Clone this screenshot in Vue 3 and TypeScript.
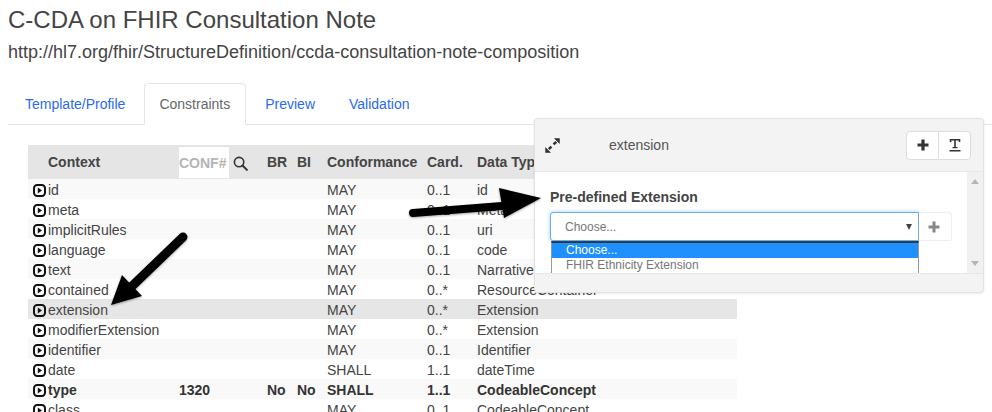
<script setup lang="ts">
interface Row {
  name: string;
  conf?: string;
  br?: string;
  bi?: string;
  conformance: string;
  card: string;
  type: string;
  bold?: boolean;
  active?: boolean;
}

const tabs = ['Template/Profile', 'Constraints', 'Preview', 'Validation'];

const rows: Row[] = [
  { name: 'id', conformance: 'MAY', card: '0..1', type: 'id' },
  { name: 'meta', conformance: 'MAY', card: '0..1', type: 'Meta' },
  { name: 'implicitRules', conformance: 'MAY', card: '0..1', type: 'uri' },
  { name: 'language', conformance: 'MAY', card: '0..1', type: 'code' },
  { name: 'text', conformance: 'MAY', card: '0..1', type: 'Narrative' },
  { name: 'contained', conformance: 'MAY', card: '0..*', type: 'ResourceContainer' },
  { name: 'extension', conformance: 'MAY', card: '0..*', type: 'Extension', active: true },
  { name: 'modifierExtension', conformance: 'MAY', card: '0..*', type: 'Extension' },
  { name: 'identifier', conformance: 'MAY', card: '0..1', type: 'Identifier' },
  { name: 'date', conformance: 'SHALL', card: '1..1', type: 'dateTime' },
  { name: 'type', conf: '1320', br: 'No', bi: 'No', conformance: 'SHALL', card: '1..1', type: 'CodeableConcept', bold: true },
  { name: 'class', conformance: 'MAY', card: '0..1', type: 'CodeableConcept' },
];
</script>

<template>
  <div class="page">
    <h1 class="title">C-CDA on FHIR Consultation Note</h1>
    <p class="url">http://hl7.org/fhir/StructureDefinition/ccda-consultation-note-composition</p>

    <ul class="tabs">
      <li v-for="tab in tabs" :key="tab" class="tab" :class="{ current: tab === 'Constraints' }">{{ tab }}</li>
    </ul>

    <div class="grid">
      <div class="row head">
        <div class="context-head">Context</div>
        <div class="conf-head">
          <span class="conf-input">CONF#</span>
          <svg class="search" viewBox="0 0 16 16" width="15" height="15">
            <circle cx="6.5" cy="6.5" r="5" fill="none" stroke="#333" stroke-width="1.7" />
            <path d="M10.2 10.2 14.8 14.8" stroke="#333" stroke-width="2.2" stroke-linecap="round" />
          </svg>
        </div>
        <div>BR</div>
        <div>BI</div>
        <div>Conformance</div>
        <div>Card.</div>
        <div>Data Type</div>
      </div>
      <div
        v-for="row in rows"
        :key="row.name"
        class="row"
        :class="{ strong: row.bold, active: row.active }"
      >
        <div class="name">
          <svg class="play" viewBox="0 0 13 13" width="13" height="13">
            <rect x="1" y="1" width="11" height="11" rx="3.2" fill="none" stroke="#111" stroke-width="2" />
            <path d="M4.8 3.6 9 6.5 4.8 9.4Z" fill="#111" />
          </svg>
          {{ row.name }}
        </div>
        <div>{{ row.conf }}</div>
        <div>{{ row.br }}</div>
        <div>{{ row.bi }}</div>
        <div>{{ row.conformance }}</div>
        <div>{{ row.card }}</div>
        <div>{{ row.type }}</div>
      </div>
    </div>

    <section class="panel">
      <header class="panel-head">
        <svg class="expand" viewBox="0 0 16 16" width="17" height="17">
          <path d="M9 7 11.5 4.5M7 9 4.5 11.5" stroke="#333" stroke-width="2.4" />
          <path d="M10 1.5H14.5V6ZM1.5 10V14.5H6Z" fill="#333" stroke="#333" stroke-width="0.6" />
        </svg>
        <span class="panel-title">extension</span>
        <div class="btn-group">
          <button class="icon-btn">
            <svg viewBox="0 0 14 14" width="14" height="14">
              <path d="M7 1.5V12.5M1.5 7H12.5" stroke="#333" stroke-width="3.2" />
            </svg>
          </button>
          <button class="icon-btn">
            <svg viewBox="0 0 14 14" width="14" height="14">
              <path d="M2.5 4V1.8H11.5V4M7 1.8V10" fill="none" stroke="#333" stroke-width="1.6" />
              <path d="M4.5 9.6H9.5M1.5 12.7H12.5" stroke="#333" stroke-width="1.4" />
            </svg>
          </button>
        </div>
      </header>
      <div class="panel-body">
        <div class="form">
          <label class="label">Pre-defined Extension</label>
          <div class="select-line">
            <div class="select">
              <span>Choose...</span>
              <i class="caret"></i>
            </div>
            <button class="add">
              <svg viewBox="0 0 14 14" width="14" height="14">
                <path d="M7 1.5V12.5M1.5 7H12.5" stroke="#888" stroke-width="3" />
              </svg>
            </button>
          </div>
          <ul class="options">
            <li class="picked">Choose...</li>
            <li>FHIR Ethnicity Extension</li>
          </ul>
        </div>
        <div class="scrollbar">
          <i class="up"></i>
          <i class="down"></i>
        </div>
      </div>
      <footer class="panel-foot"></footer>
    </section>

    <svg class="arrows" width="992" height="412" viewBox="0 0 992 412">
      <defs>
        <filter id="soft" x="-20%" y="-20%" width="140%" height="140%">
          <feDropShadow dx="0" dy="1" stdDeviation="1" flood-color="#000" flood-opacity="0.35" />
        </filter>
      </defs>
      <g filter="url(#soft)">
        <path d="M183 237 128 290" stroke="#000" stroke-width="9" stroke-linecap="round" />
        <path d="M111 305 122 275 142 296Z" fill="#000" />
        <path d="M413 213 515 205" stroke="#000" stroke-width="8" stroke-linecap="round" />
        <path d="M541 198 499 188 504 218Z" fill="#000" />
      </g>
    </svg>
  </div>
</template>

<style scoped>
.page {
  position: relative;
  width: 992px;
  height: 412px;
  overflow: hidden;
  background: #fff;
  color: #444;
  font-family: "Liberation Sans", Arial, sans-serif;
  font-size: 14px;
}

.title {
  margin: 0;
  padding: 6px 0 0 8px;
  font-size: 24px;
  font-weight: 400;
  line-height: 28px;
  color: #444;
}

.url {
  margin: 7px 0 0 8px;
  font-size: 18px;
  line-height: 22px;
  color: #444;
}

.tabs {
  display: flex;
  height: 41px;
  margin: 20px 0 0 8px;
  padding: 0;
  list-style: none;
  border-bottom: 1px solid #e6e6e6;
}

.tab {
  padding: 11px 16px 0;
  color: #2a6af0;
  font-size: 14px;
  line-height: 18px;
  border: 1px solid transparent;
}

.tab:first-child,
.tab.current {
  margin-right: 2px;
}

.tab.current {
  box-sizing: border-box;
  height: 42px;
  padding: 11px 15px 0 14px;
  color: #666;
  background: #fff;
  border-color: #e6e6e6;
  border-bottom-color: #fff;
  border-radius: 4px 4px 0 0;
}

.grid {
  width: 709px;
  margin: 20px 0 0 28px;
}

.row {
  display: grid;
  grid-template-columns: 151px 88px 30px 30px 100px 50px 1fr;
  box-sizing: border-box;
  height: 20px;
  padding-top: 2px;
  align-items: center;
  line-height: 18px;
  color: #444;
}

.row:nth-child(even) {
  background: #f9f9f9;
}

.row.active {
  background: #e6e6e6;
}

.row.strong {
  font-weight: 700;
  color: #333;
}

.row.head {
  height: 34px;
  padding-top: 0;
  background: #e5e5e5;
  font-weight: 700;
  color: #444;
}

.context-head {
  padding-left: 20px;
}

.conf-head {
  display: flex;
  align-items: center;
  gap: 4px;
}

.conf-input {
  width: 50px;
  height: 31px;
  line-height: 33px;
  background: #fff;
  color: #b5b5b5;
  white-space: nowrap;
}

.search {
  margin-top: 2px;
}

.name {
  display: flex;
  align-items: center;
  gap: 2px;
  padding-left: 5px;
}

.panel {
  position: absolute;
  left: 534px;
  top: 118px;
  display: flex;
  flex-direction: column;
  width: 450px;
  height: 175px;
  box-sizing: border-box;
  background: #f3f3f3;
  border: 1px solid #e2e2e2;
  border-radius: 4px;
  box-shadow: 0 1px 3px rgba(0, 0, 0, 0.08);
}

.panel-head {
  display: flex;
  align-items: center;
  height: 52px;
  padding: 0 12px 0 9px;
  border-bottom: 1px solid #e6e6e6;
}

.panel-title {
  margin-left: 48px;
  font-size: 14px;
  color: #555;
}

.btn-group {
  display: flex;
  margin-left: auto;
}

.icon-btn {
  display: flex;
  align-items: center;
  justify-content: center;
  width: 33px;
  height: 29px;
  padding: 0;
  background: #fff;
  border: 1px solid #ddd;
}

.icon-btn:first-child {
  border-radius: 4px 0 0 4px;
}

.icon-btn:last-child {
  margin-left: -1px;
  border-radius: 0 4px 4px 0;
}

.panel-body {
  display: flex;
  height: 101px;
  overflow: hidden;
  background: #fff;
}

.form {
  flex: 1;
  padding: 16px 0 0 15px;
}

.label {
  display: block;
  height: 24px;
  line-height: 18px;
  font-weight: 700;
  color: #444;
}

.select-line {
  display: flex;
}

.select {
  display: flex;
  align-items: center;
  justify-content: space-between;
  box-sizing: border-box;
  width: 369px;
  height: 29px;
  padding: 0 6px 0 14px;
  color: #777;
  font-size: 12px;
  background: #fff;
  border: 1px solid #66afe9;
  border-radius: 3px 0 0 3px;
  box-shadow: 0 0 4px rgba(102, 175, 233, 0.6);
}

.caret {
  width: 0;
  height: 0;
  border-left: 3px solid transparent;
  border-right: 3px solid transparent;
  border-top: 6px solid #444;
}

.add {
  display: flex;
  align-items: center;
  justify-content: center;
  box-sizing: border-box;
  width: 33px;
  height: 29px;
  padding: 0 3px 0 0;
  background: #fff;
  border: 1px solid #eee;
  border-left: 0;
  border-radius: 0 3px 3px 0;
}

.options {
  box-sizing: border-box;
  width: 368px;
  height: 40px;
  margin: 0 0 0 1px;
  padding: 0;
  list-style: none;
  font-size: 12px;
  line-height: 15px;
  color: #777;
  background: #fff;
  border: 1px solid #999;
  border-top: 2px solid #222;
}

.options li {
  padding-left: 14px;
}

.options .picked {
  color: #fff;
  background: #1e90ff;
}

.scrollbar {
  position: relative;
  width: 16px;
  background: #f1f1f1;
}

.up,
.down {
  position: absolute;
  left: 4px;
  width: 0;
  height: 0;
  border-left: 4px solid transparent;
  border-right: 4px solid transparent;
}

.up {
  top: 7px;
  border-bottom: 5px solid #b5b5b5;
}

.down {
  bottom: 7px;
  border-top: 5px solid #b5b5b5;
}

.panel-foot {
  flex: 1;
  border-top: 1px solid #e6e6e6;
}

.arrows {
  position: absolute;
  left: 0;
  top: 0;
  pointer-events: none;
}
</style>
